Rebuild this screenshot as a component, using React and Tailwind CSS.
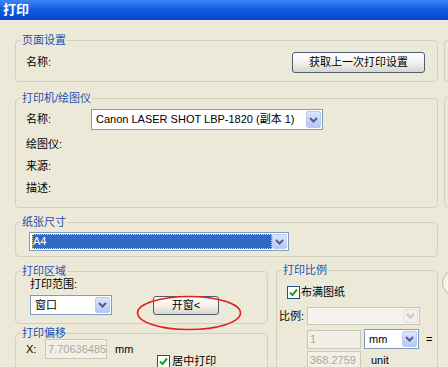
import React from 'react';

const FONT = { fontFamily: '"Liberation Sans", "Noto Sans CJK SC", sans-serif' };

// XP style chevron used by combo boxes
const Chevron = ({ faded }) => (
  <svg width="9" height="6" viewBox="0 0 9 6">
    <path d="M1 1 L4.5 4.5 L8 1" fill="none" stroke={faded ? '#c9c7ba' : '#4d6185'} strokeWidth="2" />
  </svg>
);

const Combo = ({ value, className = '', disabled, selected }) => (
  <div
    className={`flex items-stretch border ${disabled ? 'border-[#c9c7ba] bg-[#f4f3ee]' : 'border-[#7f9db9] bg-white'} p-[1px] ${className}`}
  >
    <div className="flex min-w-0 flex-1 items-center pl-[1px]">
      {selected ? (
        <div className="flex h-full w-full items-center bg-[#316ac5] pl-[1px] text-white outline-1 outline-dotted outline-[#e8d890] -outline-offset-1">
          {value}
        </div>
      ) : (
        <span className="truncate pl-[2px]">{value}</span>
      )}
    </div>
    <div
      className={`flex w-[15px] items-center justify-center rounded-[2px] border ${
        disabled ? 'border-[#e4e2d8] bg-[#f1f0ea]' : 'border-[#b9cbf3] bg-gradient-to-b from-[#dbe5fd] to-[#b5c8f4]'
      }`}
    >
      <Chevron faded={disabled} />
    </div>
  </div>
);

const Button = ({ children, className = '' }) => (
  <div
    className={`flex items-center justify-center rounded-[3px] border border-[#4b5d74] bg-gradient-to-b from-[#ffffff] via-[#f3f2ec] to-[#d9d6c8] ${className}`}
  >
    {children}
  </div>
);

const Check = () => (
  <div className="flex h-[13px] w-[13px] items-center justify-center border border-[#1c5180] bg-white">
    <svg width="9" height="9" viewBox="0 0 9 9">
      <path d="M1 4.5 L3.5 7 L8 1.5" fill="none" stroke="#21a121" strokeWidth="2" />
    </svg>
  </div>
);

const Field = ({ value, className = '' }) => (
  <div
    className={`flex items-center overflow-hidden whitespace-nowrap border border-[#c9c7ba] bg-[#f1efe6] pl-[2px] text-[#aca899] ${className}`}
  >
    {value}
  </div>
);

function Group({ title, className = '', children }) {
  return (
    <fieldset className={`relative min-w-0 rounded-[4px] border border-[#d3d0bf] ${className}`}>
      <legend className="ml-[5px] px-[1px] leading-[14px] text-[#2150b0]">{title}</legend>
      {children}
    </fieldset>
  );
}

export default function App() {
  return (
    <div className="h-[367px] w-[448px] overflow-hidden bg-[#ece9d8] text-[11px] text-black" style={FONT}>
      {/* title bar */}
      <div className="flex h-[20px] items-center bg-gradient-to-b from-[#3d86f3] via-[#0b5ae0] to-[#0648c8] pl-[3px] text-[13px] font-bold text-white">
        打印
      </div>

      <div className="flex pl-[15px] pt-[13px]">
        {/* left column */}
        <div className="flex w-[423px] flex-col">
          <Group title="页面设置" className="h-[49px]">
            <div className="flex items-center justify-between pl-[10px] pr-[12px] pt-[5px]">
              <span>名称:</span>
              <Button className="h-[21px] w-[133px]">获取上一次打印设置</Button>
            </div>
          </Group>

          <Group title="打印机/绘图仪" className="mt-[9px] h-[117px]">
            <div className="pl-[10px] pt-[4px]">
              <div className="flex h-[21px] items-center">
                <span className="w-[65px]">名称:</span>
                <Combo value="Canon LASER SHOT LBP-1820 (副本 1)" className="h-[21px] w-[232px]" />
              </div>
              <div className="mt-[3px] flex h-[22px] items-center">绘图仪:</div>
              <div className="flex h-[22px] items-center">来源:</div>
              <div className="flex h-[22px] items-center">描述:</div>
            </div>
          </Group>

          <Group title="纸张尺寸" className="mt-[7px] h-[42px]">
            <div className="pl-[13px] pt-[3px]">
              <Combo value="A4" selected className="h-[19px] w-[260px]" />
            </div>
          </Group>

          <div className="mt-[7px] flex gap-[8px]">
            <div className="flex w-[253px] flex-col">
              <Group title="打印区域" className="h-[60px]">
                <div className="pl-[14px]">
                  <div className="flex h-[13px] items-center">打印范围:</div>
                  <div className="mt-[4px] flex items-center">
                    <Combo value="窗口" className="h-[20px] w-[82px]" />
                    <Button className="ml-[41px] h-[19px] w-[66px]">开窗&lt;</Button>
                  </div>
                </div>
                <svg className="absolute left-[120px] top-[17px]" width="106" height="36" viewBox="0 0 106 36">
                  <ellipse cx="53" cy="18" rx="51.5" ry="16.5" fill="none" stroke="#e0201c" strokeWidth="1.5" />
                </svg>
              </Group>

              <Group title="打印偏移" className="mt-[2px] h-[80px]">
                <div className="-mt-[1px] flex items-start pl-[10px]">
                  <div className="flex items-center">
                    <span className="w-[19px]">X:</span>
                    <Field value="7.70636485" className="h-[20px] w-[62px]" />
                    <span className="ml-[8px]">mm</span>
                  </div>
                  <div className="ml-[24px] mt-[14px] flex items-center gap-[2px]">
                    <Check />
                    <span>居中打印</span>
                  </div>
                </div>
              </Group>
            </div>

            <Group title="打印比例" className="-mt-[1px] h-[140px] w-[162px]">
              <div className="pl-[2px] pt-[6px]">
                <div className="flex h-[18px] items-center pl-[8px]">
                  <Check />
                  <span className="ml-[1px]">布满图纸</span>
                </div>
                <div className="mt-[6px] flex items-center">
                  <span className="w-[28px]">比例:</span>
                  <Combo value="" disabled className="h-[18px] w-[113px]" />
                </div>
                <div className="mt-[4px] flex items-center">
                  <span className="w-[28px]" />
                  <Field value="1" className="h-[19px] w-[54px]" />
                  <Combo value="mm" className="ml-[3px] h-[20px] w-[55px]" />
                  <span className="ml-[7px]">=</span>
                </div>
                <div className="mt-[2px] flex items-center">
                  <span className="w-[28px]" />
                  <Field value="368.2759" className="h-[19px] w-[54px]" />
                  <span className="ml-[10px]">unit</span>
                </div>
              </div>
            </Group>
          </div>
        </div>

        {/* right column, mostly off-screen */}
        <div className="ml-[6px] flex flex-col pt-[7px]">
          <div className="h-[42px] w-[20px] rounded-l-[4px] border border-r-0 border-[#d3d0bf]" />
          <div className="mt-[15px] h-[110px] w-[20px] rounded-l-[4px] border border-r-0 border-[#d3d0bf]" />
          <div className="ml-[-2px] mt-[63px] h-[26px] w-[26px] rounded-full border border-[#b8b5a4] bg-[#f4f3ee]" />
        </div>
      </div>
    </div>
  );
}
